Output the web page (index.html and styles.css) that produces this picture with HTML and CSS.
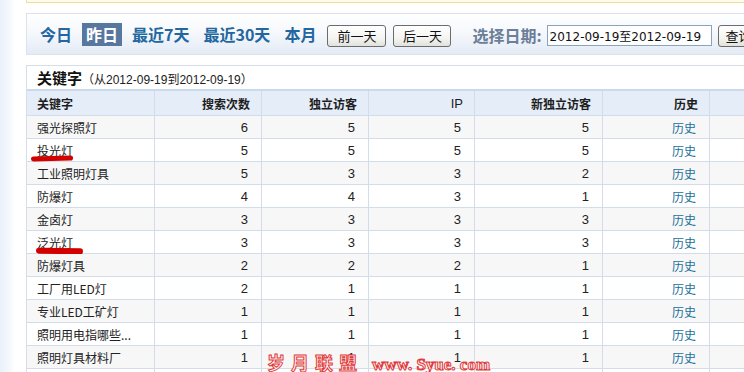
FILE: index.html
```html
<!DOCTYPE html>
<html lang="zh-CN">
<head>
<meta charset="utf-8">
<title>关键字统计</title>
<link rel="stylesheet" href="styles.css">
</head>
<body>
<div class="page">
  <div class="notice"></div>
  <div class="nav">
    <a class="nav-item">今日</a>
    <a class="nav-item active">昨日</a>
    <a class="nav-item">最近7天</a>
    <a class="nav-item">最近30天</a>
    <a class="nav-item">本月</a>
    <button class="btn btn-prev">前一天</button>
    <button class="btn btn-next">后一天</button>
    <span class="date-label">选择日期:</span>
    <input class="date-input" type="text" value="2012-09-19至2012-09-19">
    <button class="btn btn-query">查询</button>
  </div>
  <div class="panel">
    <div class="panel-title"><b>关键字</b><span class="range">（从2012-09-19到2012-09-19）</span></div>
    <table class="grid">
      <colgroup>
        <col class="c-kw"><col class="c-n"><col class="c-n"><col class="c-ip"><col class="c-kw"><col class="c-n"><col class="c-rest">
      </colgroup>
      <thead>
        <tr><th class="left">关键字</th><th>搜索次数</th><th>独立访客</th><th class="ip">IP</th><th>新独立访客</th><th>历史</th><th></th></tr>
      </thead>
      <tbody>
        <tr><td class="kw">强光探照灯</td><td>6</td><td>5</td><td>5</td><td>5</td><td class="his"><a>历史</a></td><td></td></tr>
        <tr><td class="kw"><span class="u">投光灯</span><i class="mark mark1"></i></td><td>5</td><td>5</td><td>5</td><td>5</td><td class="his"><a>历史</a></td><td></td></tr>
        <tr><td class="kw">工业照明灯具</td><td>5</td><td>3</td><td>3</td><td>2</td><td class="his"><a>历史</a></td><td></td></tr>
        <tr><td class="kw">防爆灯</td><td>4</td><td>4</td><td>3</td><td>1</td><td class="his"><a>历史</a></td><td></td></tr>
        <tr><td class="kw">金卤灯</td><td>3</td><td>3</td><td>3</td><td>3</td><td class="his"><a>历史</a></td><td></td></tr>
        <tr><td class="kw"><span class="u">泛光灯</span><i class="mark mark2"></i></td><td>3</td><td>3</td><td>3</td><td>3</td><td class="his"><a>历史</a></td><td></td></tr>
        <tr><td class="kw">防爆灯具</td><td>2</td><td>2</td><td>2</td><td>1</td><td class="his"><a>历史</a></td><td></td></tr>
        <tr><td class="kw">工厂用LED灯</td><td>2</td><td>1</td><td>1</td><td>1</td><td class="his"><a>历史</a></td><td></td></tr>
        <tr><td class="kw">专业LED工矿灯</td><td>1</td><td>1</td><td>1</td><td>1</td><td class="his"><a>历史</a></td><td></td></tr>
        <tr><td class="kw">照明用电指哪些...</td><td>1</td><td>1</td><td>1</td><td>1</td><td class="his"><a>历史</a></td><td></td></tr>
        <tr><td class="kw">照明灯具材料厂</td><td>1</td><td>1</td><td>1</td><td>1</td><td class="his"><a>历史</a></td><td></td></tr>
        <tr><td class="kw">LED灯</td><td>1</td><td>1</td><td>1</td><td>1</td><td class="his"><a>历史</a></td><td></td></tr>
      </tbody>
    </table>
  </div>
  <div class="watermark"><span class="wm-cn">岁月联盟</span><span class="wm-en">www. Syue. com</span></div>
</div>
</body>
</html>
```
FILE: styles.css
```css
html, body {
  margin: 0;
  padding: 0;
  overflow: hidden;
  height: 372px;
}
body {
  background: linear-gradient(to right, #eaf1f9 0, #f4f8fc 9px, #ffffff 15px);
  font-family: "Liberation Sans", "Noto Sans CJK SC", sans-serif;
  color: #222;
}
.page {
  position: relative;
  width: 800px;
  padding-left: 26px;
}
.notice {
  height: 2px;
  background: #fffbea;
  border-left: 1px solid #eedd9c;
  border-bottom: 1px solid #eedd9c;
}
.nav {
  margin-top: 10px;
  height: 39px;
  border: 1px solid #dce3ec;
  border-right: none;
  background: linear-gradient(to bottom, #ffffff 0%, #f6f8fc 45%, #e4ebf6 100%);
  display: flex;
  align-items: center;
  padding-left: 9px;
  padding-top: 1px;
  box-sizing: content-box;
}
.nav-item {
  font-family: "Noto Sans CJK SC", sans-serif;
  font-size: 16px;
  font-weight: bold;
  color: #22679f;
  line-height: 23px;
  height: 23px;
  padding: 0 4px;
  margin-right: 6px;
  white-space: nowrap;
}
.nav-item.active {
  background: #58779f;
  color: #fff;
}
.btn {
  font-family: "Noto Sans CJK SC", sans-serif;
  font-size: 13px;
  color: #111;
  width: 59px;
  height: 22px;
  line-height: 18px;
  padding: 0;
  border: 1px solid #6c6c6c;
  border-radius: 3px;
  background: linear-gradient(to bottom, #ffffff 0%, #f4f4f2 60%, #e2e2dc 100%);
  margin-top: 2px;
  flex: none;
}
.btn-prev { margin-left: 1px; }
.btn-next { margin-left: 7px; width: 58px; }
.btn-query { margin-left: 6px; width: 40px; text-align: left; padding-left: 7px; }
.date-label {
  font-family: "Noto Sans CJK SC", sans-serif;
  font-size: 16px;
  font-weight: bold;
  color: #6b7f98;
  margin-left: 21px;
  margin-right: 5px;
  margin-top: 1px;
  white-space: nowrap;
}
.date-input {
  flex: none;
  width: 159px;
  height: 19px;
  margin: 2px 0 0;
  padding: 0 2px;
  border: 1px solid #8aa4bd;
  font-family: "DejaVu Sans", "Noto Sans CJK SC", sans-serif;
  font-size: 12px;
  color: #111;
}
.panel {
  margin-top: 10px;
  border-top: 1px solid #d6dfe9;
  border-left: 1px solid #d6dfe9;
}
.panel-title {
  height: 23px;
  line-height: 23px;
  padding-left: 10px;
  border-bottom: 2px solid #cbdaea;
  font-family: "Noto Sans CJK SC", sans-serif;
  background: #fff;
}
.panel-title b {
  font-size: 15px;
  color: #111;
}
.range {
  font-family: "Liberation Sans", "Noto Sans CJK SC", sans-serif;
  font-size: 12px;
  color: #222;
}
.grid {
  width: 760px;
  table-layout: fixed;
  border-collapse: separate;
  border-spacing: 0;
}
.c-kw { width: 128px; }
.c-n { width: 107px; }
.c-ip { width: 106px; }
.grid th, .grid td {
  box-sizing: border-box;
  border-right: 1px solid #d3dde9;
  border-bottom: 1px solid #d3dde9;
  text-align: right;
  white-space: nowrap;
  overflow: visible;
}
.grid th {
  height: 25px;
  background: #e4edf8;
  font-family: "Noto Sans CJK SC", sans-serif;
  font-size: 12px;
  font-weight: bold;
  color: #1e1e1e;
  padding: 0 11px 0 10px;
}
.grid th.left { text-align: left; }
.grid th.ip {
  font-family: "Liberation Sans", sans-serif;
  font-weight: normal;
  font-size: 13px;
}
.grid td {
  height: 23px;
  padding: 0 13px 0 10px;
  font-size: 13px;
  color: #222;
}
.grid tbody tr:nth-child(odd) td { background: #f7f7f8; }
.grid tbody tr:nth-child(even) td { background: #ffffff; }
.grid td.kw {
  position: relative;
  text-align: left;
  font-family: "Noto Sans CJK SC", sans-serif;
  font-size: 12px;
}
.grid td.his {
  font-family: "Noto Sans CJK SC", sans-serif;
  font-size: 12px;
}
.his a { color: #21709a; }
.u { text-decoration: underline; }
.mark {
  position: absolute;
  display: block;
  height: 5px;
  background: #d40000;
  border-radius: 3px;
}
.mark1 { left: 4px; top: 17px; width: 42px; transform: rotate(-1.5deg); }
.mark2 { left: 9px; top: 17px; width: 47px; height: 6px; transform: rotate(1deg); }
.watermark {
  position: absolute;
  left: 267px;
  top: 349px;
  white-space: nowrap;
  color: #fff4f4;
  -webkit-text-stroke: 1px #e03a3a;
}
.wm-cn {
  font-family: "Noto Sans CJK SC", sans-serif;
  font-size: 18px;
  font-weight: bold;
  letter-spacing: 6px;
}
.wm-en {
  font-family: "Liberation Serif", serif;
  font-size: 17px;
  font-weight: bold;
  margin-left: 9px;
}
```
